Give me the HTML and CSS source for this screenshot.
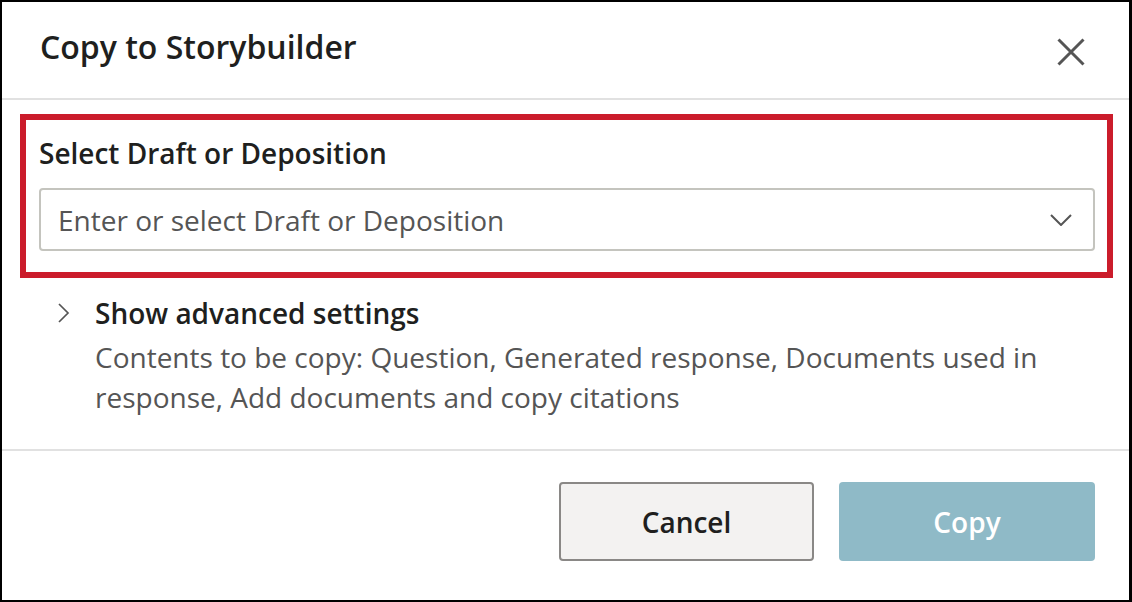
FILE: index.html
```html
<!DOCTYPE html>
<html>
<head>
    <title>Copy to Storybuilder</title>
    <link rel="stylesheet" href="styles.css">
</head>
<body>
    <div class="dialog">
        <div class="dialog-header">
            <div class="dialog-title">Copy to Storybuilder</div>
            <button class="close-btn" aria-label="Close">
                <svg width="28" height="28" viewBox="0 0 28 28">
                    <path d="M1.5 1.5 L26.5 26.5 M26.5 1.5 L1.5 26.5" stroke="#555" stroke-width="3" fill="none"/>
                </svg>
            </button>
        </div>
        <div class="dialog-body">
            <div class="target-field">
                <div class="field-label">Select Draft or Deposition</div>
                <div class="combo">
                    <span class="combo-placeholder">Enter or select Draft or Deposition</span>
                    <svg class="combo-arrow" width="22" height="12" viewBox="0 0 22 12">
                        <path d="M1 1 L11 11 L21 1" stroke="#555" stroke-width="2" fill="none"/>
                    </svg>
                </div>
            </div>
            <div class="advanced">
                <div class="advanced-toggle">
                    <svg class="toggle-arrow" width="13" height="20" viewBox="0 0 13 20">
                        <path d="M2 1 L11 10 L2 19" stroke="#555" stroke-width="1.7" fill="none"/>
                    </svg>
                    <span class="advanced-title">Show advanced settings</span>
                </div>
                <div class="advanced-desc">Contents to be copy: Question, Generated response, Documents used in response, Add documents and copy citations</div>
            </div>
        </div>
        <div class="dialog-footer">
            <button class="btn btn-cancel">Cancel</button>
            <button class="btn btn-copy" disabled>Copy</button>
        </div>
    </div>
</body>
</html>
```

FILE: styles.css
```css
body {
    margin: 0;
    padding: 0;
    background: #000;
    font-family: "Open Sans", "Noto Sans", Arial, sans-serif;
    color: #201f1e;
}
.dialog {
    box-sizing: border-box;
    width: 1132px;
    height: 602px;
    border: 2px solid #000;
    border-right-width: 3px;
    background: #fff;
    display: flex;
    flex-direction: column;
}
.dialog-header {
    height: 96px;
    border-bottom: 2px solid #e1e1e1;
    display: flex;
    align-items: center;
    justify-content: space-between;
    padding: 0 44px 0 38px;
}
.dialog-title {
    font-size: 32px;
    font-weight: 600;
    line-height: 40px;
    color: #201f1e;
    padding-bottom: 6px;
}
.close-btn {
    background: none;
    border: none;
    padding: 0;
    display: flex;
    cursor: pointer;
    margin-top: 4px;
}
.dialog-body {
    flex: 1;
    padding: 14px 16px 0 18px;
}
.target-field {
    border: 6px solid #cb1c2b;
    padding: 17px 12px 21px 13px;
}
.field-label {
    font-size: 28px;
    font-weight: 600;
    line-height: 32px;
    margin-bottom: 19px;
}
.combo {
    box-sizing: border-box;
    height: 63px;
    border: 2px solid #c4c4be;
    border-radius: 4px;
    display: flex;
    align-items: center;
    justify-content: space-between;
    padding: 0 21px 0 17px;
}
.combo-placeholder {
    font-size: 28px;
    color: #555;
}
.advanced {
    padding: 15px 20px 0 37px;
}
.advanced-toggle {
    display: flex;
    align-items: center;
    height: 40px;
}
.toggle-arrow {
    margin-right: 25px;
}
.advanced-title {
    font-size: 28px;
    font-weight: 600;
}
.advanced-desc {
    font-size: 28px;
    line-height: 40px;
    color: #555;
    margin-left: 38px;
    padding-top: 4px;
}
.dialog-footer {
    height: 151px;
    box-sizing: border-box;
    border-top: 2px solid #e1e1e1;
    display: flex;
    justify-content: flex-end;
    align-items: flex-start;
    gap: 25px;
    padding: 31px 34px 0 0;
}
.btn {
    box-sizing: border-box;
    width: 256px;
    height: 79px;
    border-radius: 4px;
    font-family: "Open Sans", "Noto Sans", Arial, sans-serif;
    font-size: 28px;
    font-weight: 600;
}
.btn-cancel {
    width: 255px;
    background: #f3f2f1;
    border: 2px solid #8a8886;
    color: #201f1e;
    cursor: pointer;
}
.btn-copy {
    background: #8fbac7;
    border: none;
    color: #fff;
}
```
